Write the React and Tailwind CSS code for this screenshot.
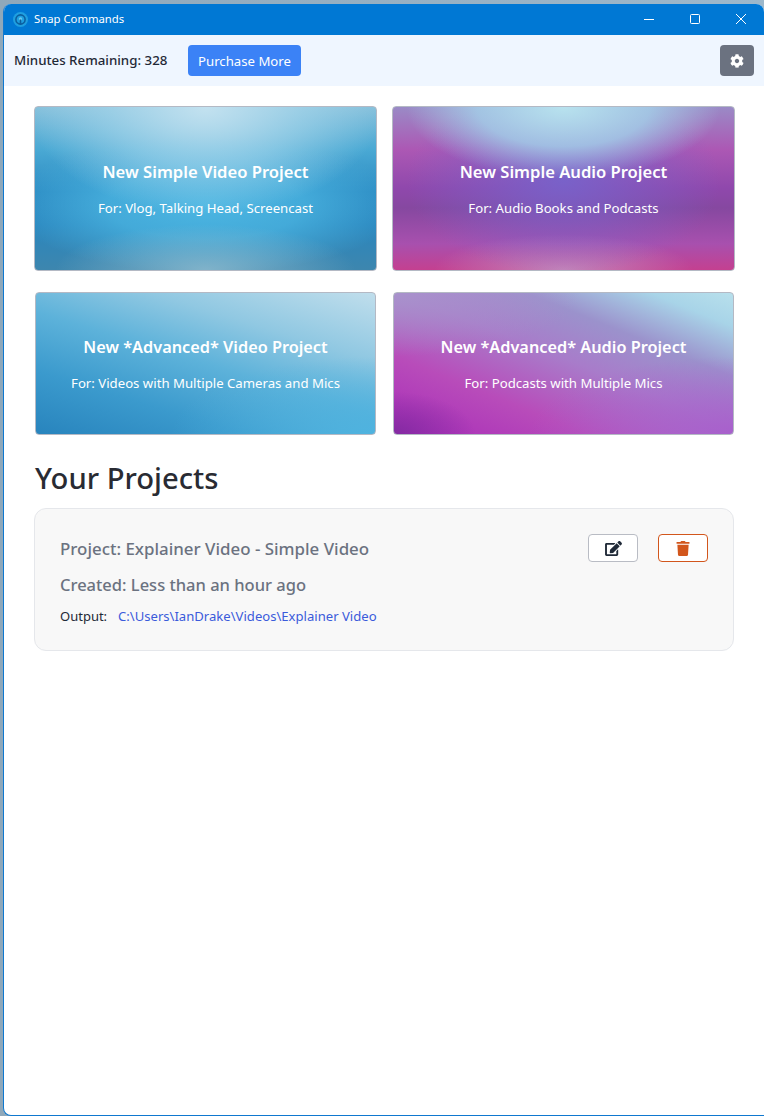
import { FaCog, FaEdit, FaTrash } from "react-icons/fa";

const fontClass = "font-['Noto_Sans','Open_Sans',sans-serif]";

const cards = [
  {
    title: "New Simple Video Project",
    subtitle: "For: Vlog, Talking Head, Screencast",
    box: "h-[165px] w-[343px]",
    titleSize: "text-[16.6px]",
    bg: "bg-[radial-gradient(ellipse_52%_66%_at_50%_0%,rgba(196,226,240,0.98)_0%,rgba(170,216,236,0.6)_55%,rgba(170,216,236,0)_100%),radial-gradient(ellipse_44%_28%_at_50%_100%,rgba(140,186,206,0.85)_0%,rgba(140,186,206,0)_100%),radial-gradient(ellipse_58%_42%_at_50%_60%,rgba(76,182,226,1)_0%,rgba(76,182,226,0.75)_50%,rgba(76,182,226,0)_100%),linear-gradient(180deg,#86c0db_0%,#4aa9d4_26%,#2b8ac2_52%,#2a86be_72%,#3d86ae_100%)]",
  },
  {
    title: "New Simple Audio Project",
    subtitle: "For: Audio Books and Podcasts",
    box: "h-[165px] w-[343px]",
    titleSize: "text-[16.6px]",
    bg: "bg-[radial-gradient(ellipse_46%_44%_at_50%_0%,rgba(184,226,238,1)_0%,rgba(165,212,234,0.8)_55%,rgba(165,212,234,0)_100%),radial-gradient(ellipse_46%_58%_at_50%_45%,rgba(118,100,204,0.9)_0%,rgba(118,100,204,0)_100%),radial-gradient(ellipse_38%_22%_at_50%_100%,rgba(196,140,190,0.9)_0%,rgba(196,140,190,0)_100%),linear-gradient(180deg,#9a8ac6_0%,#ac58b4_26%,#8f48ac_50%,#8648a0_62%,#a850ae_84%,#c44090_100%)]",
  },
  {
    title: "New *Advanced* Video Project",
    subtitle: "For: Videos with Multiple Cameras and Mics",
    box: "h-[143px] w-[341px] ml-[1px]",
    titleSize: "text-[16.3px]",
    bg: "bg-[radial-gradient(ellipse_60%_55%_at_100%_100%,rgba(79,179,223,1)_0%,rgba(79,179,223,0)_100%),linear-gradient(197deg,#c0deec_0%,#90c8e2_28%,#5db2da_50%,#3b9acd_74%,#2884bd_100%)]",
  },
  {
    title: "New *Advanced* Audio Project",
    subtitle: "For: Podcasts with Multiple Mics",
    box: "h-[143px] w-[341px] ml-[1px]",
    titleSize: "text-[16.3px]",
    bg: "bg-[radial-gradient(ellipse_24%_30%_at_0%_100%,rgba(128,42,160,0.9)_0%,rgba(128,42,160,0)_100%),radial-gradient(ellipse_60%_55%_at_100%_100%,rgba(168,96,204,1)_0%,rgba(168,96,204,0)_100%),radial-gradient(ellipse_55%_45%_at_0%_0%,rgba(168,146,204,1)_0%,rgba(168,146,204,0)_100%),linear-gradient(202deg,#b8e0ec_0%,#a8d4e8_12%,#9b92cc_30%,#a87cca_48%,#b84cba_72%,#a82cb8_100%)]",
  },
];

function AppLogo() {
  return (
    <svg width="15" height="15" viewBox="0 0 15 15" className="shrink-0">
      <circle cx="7.5" cy="7.5" r="7.5" fill="#1f9fe0" />
      <circle cx="7.5" cy="7.5" r="4.6" fill="none" stroke="#0b5f9f" strokeWidth="1.6" />
      <circle cx="7.5" cy="7" r="1.7" fill="#63c8f0" />
      <path d="M7.5 7.5v5" stroke="#0b5f9f" strokeWidth="1.6" />
    </svg>
  );
}

function WindowButtons() {
  return (
    <div className="flex h-full items-center">
      <svg width="46" height="31" viewBox="0 0 46 31">
        <path d="M18 15.5h10" stroke="#fff" strokeWidth="1" />
      </svg>
      <svg width="46" height="31" viewBox="0 0 46 31">
        <rect x="18.5" y="10.5" width="9" height="9" rx="1" fill="none" stroke="#fff" strokeWidth="1" />
      </svg>
      <svg width="46" height="31" viewBox="0 0 46 31">
        <path d="M18 10l10 10M28 10L18 20" stroke="#fff" strokeWidth="1" />
      </svg>
    </div>
  );
}

function ProjectCard({ title, subtitle, box, titleSize, bg }) {
  return (
    <button
      className={`${box} ${bg} flex flex-col items-center justify-center rounded-[4px] border border-[#b4b9c4] text-white`}
    >
      <span className={`${titleSize} leading-[24px] font-semibold`}>{title}</span>
      <span className="mt-[15px] text-[13.2px] leading-[18px]">{subtitle}</span>
    </button>
  );
}

export default function App() {
  return (
    <div className={`${fontClass} h-[1116px] w-[764px] overflow-hidden bg-[linear-gradient(90deg,#8fa8ba,#9db8cb)] pt-[4px] pl-[3px]`}>
      <div className="flex h-[1112px] flex-col overflow-hidden rounded-t-[8px] rounded-bl-[8px] border-b border-l border-[#0f78cf] bg-white">
        <div className="flex h-[31px] shrink-0 items-center justify-between bg-[#0078d4] pl-[9px]">
          <div className="flex items-center gap-[6px]">
            <AppLogo />
            <span className="text-[11.3px] text-white">Snap Commands</span>
          </div>
          <div className="h-full">
            <WindowButtons />
          </div>
        </div>

        <div className="flex h-[51px] shrink-0 items-center justify-between bg-[#eff6ff] px-[10px]">
          <div className="flex items-center">
            <span className="w-[174px] pt-[1px] text-[13.3px] font-medium text-[#1f2937]">Minutes Remaining: 328</span>
            <button className="h-[31px] w-[113px] rounded-[4px] bg-[#3b82f6] pt-[2px] text-[13.2px] text-white">
              Purchase More
            </button>
          </div>
          <button className="flex h-[31px] w-[34px] items-center justify-center rounded-[4px] bg-[#6b7280]">
            <FaCog className="h-[14px] w-[14px] text-white" />
          </button>
        </div>

        <div className="px-[30px] pt-[20px]">
          <div className="grid grid-cols-[343px_343px] gap-x-[15px] gap-y-[21px]">
            {cards.map((card) => (
              <ProjectCard key={card.title} {...card} />
            ))}
          </div>

          <h2 className="mt-[24px] ml-[1px] text-[29.2px] leading-[38px] font-medium text-[#292b33]">Your Projects</h2>

          <div className="mt-[11px] flex h-[143px] w-[700px] items-start justify-between rounded-[12px] border border-[#e5e7eb] bg-[#f8f8f8] pt-[25px] pr-[25px] pl-[25px]">
            <div>
              <p className="text-[16.9px] leading-[30px] font-medium text-[#6b7280]">Project: Explainer Video - Simple Video</p>
              <p className="mt-[6px] text-[16.5px] leading-[30px] font-medium text-[#6b7280]">Created: Less than an hour ago</p>
              <p className="mt-[6px] flex text-[13px] leading-[20px] text-[#1f2937]">
                <span className="w-[58px]">Output:</span>
                <span className="text-[13.1px] text-[#3b5bdb]">C:\Users\IanDrake\Videos\Explainer Video</span>
              </p>
            </div>
            <div className="flex gap-[20px]">
              <button className="flex h-[28px] w-[50px] items-center justify-center rounded-[4px] border border-[#b9bcc4] bg-white">
                <FaEdit className="h-[15px] w-[17px] text-[#1f2937]" />
              </button>
              <button className="flex h-[28px] w-[50px] items-center justify-center rounded-[4px] border border-[#d2561c] bg-white">
                <FaTrash className="h-[15px] w-[14px] text-[#d2561c]" />
              </button>
            </div>
          </div>
        </div>
      </div>
    </div>
  );
}
